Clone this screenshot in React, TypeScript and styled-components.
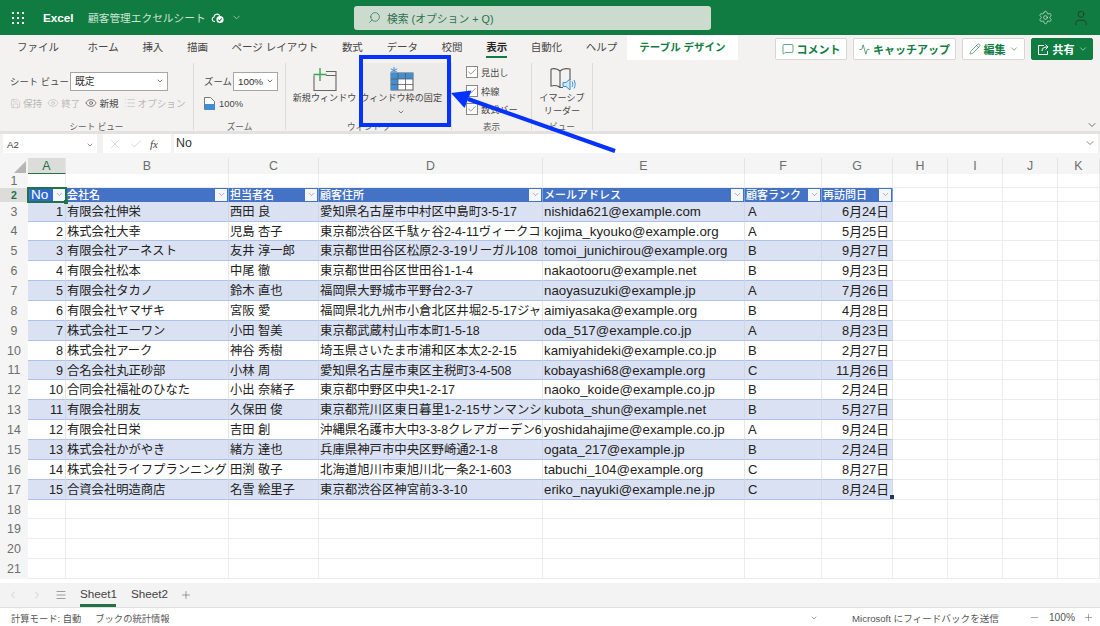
import React from "react";
import styled, { createGlobalStyle } from "styled-components";
import {
  Activity, Check, ChevronDown, ChevronLeft, ChevronRight, Eye, List, Menu, MessageSquare,
  Minus, Pencil, Plus, Save, Search, Settings, User, X,
} from "lucide-react";

const FONT = '"Liberation Sans", "Noto Sans CJK JP", sans-serif';
const GREEN = "#107c41";
const COLS = "28px 38px 163px 90px 224px 202px 77px 71px 55px 55px 55px 42px";

const Global = createGlobalStyle`
  html, body { margin: 0; padding: 0; width: 1100px; height: 626px; overflow: hidden; background: #fff; }
  body { font-family: ${FONT}; color: #323130; }
  * { box-sizing: border-box; }
`;
const Page = styled.div`
  position: relative; width: 1100px; height: 626px; display: flex; flex-direction: column; overflow: hidden;
`;

/* title bar */
const TitleBar = styled.header`
  height: 35px; background: ${GREEN}; display: grid; grid-template-columns: 354px 357px 1fr; align-items: center; color: #fff;
`;
const TitleLeft = styled.div`display: flex; align-items: center; padding-left: 12px;`;
const Waffle = styled.svg`width: 12px; height: 12px; margin-right: 19px;`;
const AppName = styled.span`font-size: 11.8px; font-weight: 700; width: 45px; letter-spacing: -0.1px;`;
const DocName = styled.span`font-size: 10.7px; color: #cfe3d7; white-space: nowrap; width: 123px;`;
const SearchBox = styled.div`
  height: 24px; background: #cbdccf; border-radius: 3px; display: flex; align-items: center; padding-left: 14px; gap: 6px;
  font-size: 10.8px; color: #2f6f4c;
`;
const TitleRight = styled.div`display: flex; justify-content: flex-end; align-items: center; gap: 19px; padding-right: 10px;`;

/* tabs */
const TabBar = styled.div`
  height: 27px; background: #f3f2f1; display: flex; justify-content: space-between; align-items: flex-start; padding: 0 7px 0 17px;
`;
const Tabs = styled.nav`display: flex; gap: 23.6px; height: 25px;`;
const Tab = styled.div<{ $active?: boolean; $first?: boolean }>`
  position: relative; height: 23px; line-height: 24px; font-size: 10.5px; white-space: nowrap; color: ${(p) => (p.$active ? "#252423" : "#484644")};
  font-weight: ${(p) => (p.$active ? 700 : 400)}; margin-right: ${(p) => (p.$first ? 5 : 0)}px;
  border-bottom: ${(p) => (p.$active ? `2px solid ${GREEN}` : "none")};
`;
const DesignTab = styled.div`
  height: 25px; line-height: 24px; width: 111px; margin-left: -14px; background: #fff; color: ${GREEN}; font-size: 10.5px; font-weight: 700; text-align: center; white-space: nowrap;
`;
const Actions = styled.div`display: flex; gap: 6px; padding-top: 3px;`;
const ActionButton = styled.div<{ $w: number; $primary?: boolean }>`
  width: ${(p) => p.$w}px; height: 22px; border-radius: 2px; display: flex; align-items: center; justify-content: center; gap: 3px;
  font-size: 11px; font-weight: 700; white-space: nowrap;
  background: ${(p) => (p.$primary ? GREEN : "#fff")}; color: ${(p) => (p.$primary ? "#fff" : GREEN)};
  border: 1px solid ${(p) => (p.$primary ? GREEN : "#d6d6d6")};
`;

/* ribbon */
const Ribbon = styled.section`
  position: relative; height: 72px; background: #f3f2f1; display: flex; padding-top: 1px; border-bottom: 3px solid #e3e2e1;
`;
const Group = styled.div<{ $w: number; $last?: boolean }>`
  width: ${(p) => p.$w}px; height: 67px; display: flex; flex-direction: column; border-right: ${(p) => (p.$last ? "none" : "1px solid #dcdbda")};
`;
const GroupBody = styled.div`flex: 1; min-height: 0; display: flex; position: relative;`;
const GroupLabel = styled.div`height: 13px; line-height: 13px; margin-bottom: -4px; font-size: 8.6px; color: #605e5c; text-align: center; white-space: nowrap; overflow: hidden;`;
const Stack = styled.div<{ $pl: number }>`display: flex; flex-direction: column; gap: 2px; padding: 8px 0 0 ${(p) => p.$pl}px;`;
const Line = styled.div`display: flex; align-items: center; height: 20px; gap: 4px; white-space: nowrap; font-size: 9.4px; color: #484644;`;
const FieldLabel = styled.span<{ $w: number }>`width: ${(p) => p.$w}px; white-space: nowrap;`;
const Select = styled.div<{ $w: number }>`
  width: ${(p) => p.$w}px; height: 19px; background: #fff; border: 1px solid #a6a6a6; display: flex; align-items: center; justify-content: space-between;
  padding: 0 3px 0 4px; font-size: 9.8px; color: #323130;
`;
const Mini = styled.span<{ $off?: boolean }>`
  display: inline-flex; align-items: center; gap: 2px; font-size: 9.6px; color: ${(p) => (p.$off ? "#b9b8b7" : "#484644")}; margin-right: 5px;
`;
const BigButton = styled.div<{ $w: number; $hl?: boolean; $pl?: number; $pr?: number }>`
  width: ${(p) => p.$w}px; height: 64px; display: flex; flex-direction: column; align-items: center; padding: 4px ${(p) => p.$pr ?? 0}px 0 ${(p) => p.$pl ?? 0}px; font-size: 9.1px; color: #484644;
  background: ${(p) => (p.$hl ? "#edebe9" : "transparent")}; white-space: nowrap; overflow: visible; line-height: 13px;
`;
const BigIcon = styled.svg`display: block; height: 25px; flex: none;`;
const ButtonChevron = styled.span`display: flex; margin-top: 3px; color: #484644;`;
const CheckList = styled.div`display: flex; flex-direction: column; padding: 2px 0 0 14px; gap: 4px;`;
const CheckRow = styled.div`display: flex; align-items: center; gap: 3px; height: 14.5px; font-size: 9.2px; color: #484644; white-space: nowrap;`;
const Box = styled.span`width: 12px; height: 12px; background: #fff; border: 1px solid #8a8886; display: inline-flex; align-items: center; justify-content: center; color: #484644;`;
const Collapse = styled.div`position: absolute; right: 2px; bottom: 0; color: #484644; display: flex;`;

/* formula bar */
const FormulaBar = styled.div`height: 19px; background: #f3f2f1; display: flex; gap: 3px; padding: 0 2px 0 3px;`;
const NameBox = styled.div`
  width: 94px; margin-right: 3px; background: #fff; display: flex; align-items: center; justify-content: space-between; padding: 2px 3px 0 4px; font-size: 9.6px; color: #444;
`;
const FxBox = styled.div`width: 68px; background: #fff; display: flex; align-items: center; gap: 7px; padding-left: 5px; color: #c0bfbe;`;
const Fx = styled.span`font: italic 11px "Liberation Serif", serif; color: #444;`;
const FormulaInput = styled.div`flex: 1; background: #fff; display: flex; align-items: center; justify-content: space-between; padding: 0 2px 1px 2px; font-size: 12.4px;`;

/* sheet */
const Sheet = styled.main`flex: 1; min-height: 0; overflow: hidden; background: #fff;`;
const GridRow = styled.div<{ $h: number }>`display: grid; grid-template-columns: ${COLS}; height: ${(p) => p.$h}px;`;
const HeadRow = styled(GridRow)`background: #f5f5f5;`;
const Corner = styled.div`position: relative; overflow: hidden;`;
const CornerMark = styled.svg`position: absolute; right: 2px; bottom: 1px;`;
const ColHead = styled.div<{ $sel?: boolean }>`
  margin-top: 5px; background: ${(p) => (p.$sel ? "#dcdcdb" : "transparent")}; color: ${(p) => (p.$sel ? "#217346" : "#6e6e6e")}; font-size: 12.4px; padding-top: 1px; line-height: 14px; text-align: center;
  border-right: 1px solid #e4e4e4; border-bottom: ${(p) => (p.$sel ? "1.5px solid #217346" : "none")};
`;
const RowHead = styled.div<{ $sel?: boolean }>`
  background: ${(p) => (p.$sel ? "#dcdcdb" : "#f5f5f5")}; color: ${(p) => (p.$sel ? "#217346" : "#6e6e6e")}; font-size: ${(p) => (p.$sel ? 10.5 : 12.4)}px; display: flex; align-items: center; justify-content: center;
  font-weight: ${(p) => (p.$sel ? 700 : 400)};
`;
const Blank = styled.div`border-right: 1px solid #ececec; border-bottom: 1px solid #ececec;`;
const HeadCell = styled.div`
  position: relative; background: #4472c4; color: #fff; font-size: 11px; font-weight: 500; line-height: 15px; padding-left: 1px; white-space: nowrap; overflow: hidden;
  border-right: 1px solid #7f9fd8;
`;
const FilterBtn = styled.span`
  position: absolute; right: 1px; top: 1px; width: 12px; height: 12px; background: #f4f6fa; color: #777; display: flex; align-items: center; justify-content: center;
`;
const Active = styled.div`
  position: relative; background: #4472c4; color: #fff; font-size: 13.5px; line-height: 12.5px; outline: 2px solid #217346; outline-offset: -1px; z-index: 1; white-space: nowrap;
`;
const ActiveText = styled.span`display: inline-block; width: 23px; background: #2f68cf; padding-left: 1px; margin: 1px 0 0 2px;`;
const Handle = styled.i`position: absolute; right: -2px; bottom: -2px; width: 4px; height: 4px; background: #217346;`;
const DataCell = styled.div<{ $odd: boolean; $align?: string; $size?: number; $pad?: number }>`
  background: ${(p) => (p.$odd ? "#d9e1f2" : "#fff")}; font-size: ${(p) => p.$size ?? 12.3}px; color: #222; line-height: 18px; white-space: nowrap; overflow: hidden;
  text-align: ${(p) => p.$align ?? "left"}; padding: 1px ${(p) => p.$pad ?? 1}px 0 ${(p) => p.$pad ?? 1}px;
  border-right: 1px solid ${(p) => (p.$odd ? "#cfd6e6" : "#e6e6e6")}; border-bottom: 1.5px solid #aec3e8;
`;
const TableEnd = styled(Blank)`position: relative;`;
const Corner2 = styled.i`position: absolute; left: -3px; bottom: 0; width: 4px; height: 4px; background: #1f3864;`;

/* bottom */
const SheetTabs = styled.div`height: 25px; background: #f3f3f3; display: flex; align-items: center; padding-left: 7px; border-bottom: 1px solid #e0e0e0; color: #555;`;
const NavIcon = styled.span<{ $w: number }>`width: ${(p) => p.$w}px; display: flex; color: inherit;`;
const SheetTab = styled.div<{ $active?: boolean }>`
  width: 36px; height: 24px; line-height: 22px; font-size: 11.7px; margin-right: 15px; white-space: nowrap; color: #444; border-bottom: 3px solid ${(p) => (p.$active ? "#217346" : "transparent")};
`;
const AddSheet = styled.span`display: flex; margin-left: -2px;`;
const StatusBar = styled.footer`height: 18px; background: #fff; display: flex; align-items: center; justify-content: space-between; padding: 1px 6px 0 11px; font-size: 9.3px; color: #555;`;
const StatusGroup = styled.div`display: flex; align-items: center; white-space: nowrap;`;
const FeedbackText = styled.span`font-size: 9.6px; margin-right: 30px;`;
const StatusLabel = styled.span`margin-right: 14px;`;
const ZoomText = styled.span`margin: 0 8px 0 9px; font-size: 10.2px;`;
const StatusChevron = styled.span`display: flex; margin-right: 34px;`;

/* annotation */
const Highlight = styled.div`position: absolute; left: 359px; top: 55px; width: 92px; height: 72px; border: 4px solid #0433ff; pointer-events: none;`;
const ArrowLayer = styled.svg`position: absolute; left: 440px; top: 80px; width: 190px; height: 80px; pointer-events: none;`;

const rows = [
  ["有限会社伸栄", "西田 良", "愛知県名古屋市中村区中島町3-5-17", "nishida621@example.com", "A", "6月24日"],
  ["株式会社大幸", "児島 杏子", "東京都渋谷区千駄ヶ谷2-4-11ヴィークコート", "kojima_kyouko@example.org", "A", "5月25日"],
  ["有限会社アーネスト", "友井 淳一郎", "東京都世田谷区松原2-3-19リーガル108", "tomoi_junichirou@example.org", "B", "9月27日"],
  ["有限会社松本", "中尾 徹", "東京都世田谷区世田谷1-1-4", "nakaotooru@example.net", "B", "9月23日"],
  ["有限会社タカノ", "鈴木 直也", "福岡県大野城市平野台2-3-7", "naoyasuzuki@example.jp", "A", "7月26日"],
  ["有限会社ヤマザキ", "宮阪 愛", "福岡県北九州市小倉北区井堀2-5-17ジャルダン", "aimiyasaka@example.org", "B", "4月28日"],
  ["株式会社エーワン", "小田 智美", "東京都武蔵村山市本町1-5-18", "oda_517@example.co.jp", "A", "8月23日"],
  ["株式会社アーク", "神谷 秀樹", "埼玉県さいたま市浦和区本太2-2-15", "kamiyahideki@example.co.jp", "B", "2月27日"],
  ["合名会社丸正砂部", "小林 周", "愛知県名古屋市東区主税町3-4-508", "kobayashi68@example.org", "C", "11月26日"],
  ["合同会社福祉のひなた", "小出 奈緒子", "東京都中野区中央1-2-17", "naoko_koide@example.co.jp", "B", "2月24日"],
  ["有限会社朋友", "久保田 俊", "東京都荒川区東日暮里1-2-15サンマンション", "kubota_shun@example.net", "B", "5月27日"],
  ["有限会社日栄", "吉田 創", "沖縄県名護市大中3-3-8クレアガーデン601", "yoshidahajime@example.co.jp", "A", "9月24日"],
  ["株式会社かがやき", "緒方 達也", "兵庫県神戸市中央区野崎通2-1-8", "ogata_217@example.jp", "B", "2月24日"],
  ["株式会社ライフプランニング", "田渕 敬子", "北海道旭川市東旭川北一条2-1-603", "tabuchi_104@example.org", "C", "8月27日"],
  ["合資会社明造商店", "名雪 絵里子", "東京都渋谷区神宮前3-3-10", "eriko_nayuki@example.ne.jp", "C", "8月24日"],
];
const tail = [0, 1, 2, 3];
const letters = ["A", "B", "C", "D", "E", "F", "G", "H", "I", "J", "K"];
const headers = ["会社名", "担当者名", "顧客住所", "メールアドレス", "顧客ランク", "再訪問日"];

const Filter = () => (
  <FilterBtn><ChevronDown size={9} strokeWidth={1.5} /></FilterBtn>
);
const Blanks = ({ n }: { n: number }) => (
  <>{Array.from({ length: n }, (_, i) => <Blank key={i} />)}</>
);

export default function App() {
  return (
    <Page>
      <Global />
      <TitleBar>
        <TitleLeft>
          <Waffle viewBox="0 0 12 12" fill="#fff">
            {[1, 6, 11].flatMap((x) => [1, 6, 11].map((y) => <rect key={`${x}${y}`} x={x - 1} y={y - 1} width="2" height="2" />))}
          </Waffle>
          <AppName>Excel</AppName>
          <DocName>顧客管理エクセルシート</DocName>
          <svg width="14" height="12" viewBox="0 0 14 12" fill="none" stroke="#fff" strokeWidth="1.1">
            <path d="M4 9.500H3A2.300 2.300 0 0 1 3 5a3 3 0 0 1 5.700-1.200" />
            <circle cx="9" cy="7.500" r="3.600" fill="#fff" stroke="none" />
            <path d="M7.200 7.600l1.300 1.300 2.200-2.400" stroke={GREEN} />
          </svg>
          <ChevronDown size={11} color="#cfe3d7" strokeWidth={1.4} style={{ marginLeft: 6 }} />
        </TitleLeft>
        <SearchBox>
          <Search size={13} strokeWidth={1.3} style={{ transform: "scaleX(-1)" }} />
          <span>検索 (オプション + Q)</span>
        </SearchBox>
        <TitleRight>
          <Settings size={15} strokeWidth={1.1} color="#dce9e1" />
          <User size={18} strokeWidth={1.2} color="#1f3f2c" />
        </TitleRight>
      </TitleBar>

      <TabBar>
        <Tabs>
          <Tab $first>ファイル</Tab>
          <Tab>ホーム</Tab>
          <Tab>挿入</Tab>
          <Tab>描画</Tab>
          <Tab>ページ レイアウト</Tab>
          <Tab>数式</Tab>
          <Tab>データ</Tab>
          <Tab>校閲</Tab>
          <Tab $active>表示</Tab>
          <Tab>自動化</Tab>
          <Tab>ヘルプ</Tab>
          <DesignTab>テーブル デザイン</DesignTab>
        </Tabs>
        <Actions>
          <ActionButton $w={72}><MessageSquare size={12} strokeWidth={1.3} />コメント</ActionButton>
          <ActionButton $w={103}><Activity size={11} strokeWidth={1.5} />キャッチアップ</ActionButton>
          <ActionButton $w={63}><Pencil size={12} strokeWidth={1.2} />編集<ChevronDown size={10} strokeWidth={1.3} /></ActionButton>
          <ActionButton $w={62} $primary>
            <svg width="13" height="13" viewBox="0 0 13 13" fill="none" stroke="#fff" strokeWidth="1"><path d="M7 2.500H1.500v9h9V8M5 8c0-3 2-4 5-4M8.500 1.500L11 4 8.500 6.500" /></svg>
            共有<ChevronDown size={10} strokeWidth={1.3} />
          </ActionButton>
        </Actions>
      </TabBar>

      <Ribbon>
        <Group $w={194}>
          <GroupBody>
            <Stack $pl={10}>
              <Line><FieldLabel $w={56}>シート ビュー</FieldLabel><Select $w={98}>既定<ChevronDown size={8} strokeWidth={2} /></Select></Line>
              <Line style={{ gap: 0 }}>
                <Mini $off><Save size={11} strokeWidth={1.2} />保持</Mini>
                <Mini $off><Eye size={12} strokeWidth={1.2} />終了</Mini>
                <Mini><Eye size={12} strokeWidth={1.3} />新規</Mini>
                <Mini $off><List size={12} strokeWidth={1.2} />オプション</Mini>
              </Line>
            </Stack>
          </GroupBody>
          <GroupLabel>シート ビュー</GroupLabel>
        </Group>
        <Group $w={92}>
          <GroupBody>
            <Stack $pl={10}>
              <Line><FieldLabel $w={25}>ズーム</FieldLabel><Select $w={45}>100%<ChevronDown size={8} strokeWidth={2} /></Select></Line>
              <Line>
                <svg width="11" height="13" viewBox="0 0 11 13">
                  <path d="M.5.5h6l4 4v8H.5z" fill="#fff" stroke="#777" />
                  <rect x="1" y="7" width="10" height="6" fill="#3f8fd2" />
                </svg>
                100%
              </Line>
            </Stack>
          </GroupBody>
          <GroupLabel>ズーム</GroupLabel>
        </Group>
        <Group $w={166}>
          <GroupBody>
            <BigButton $w={75} $pl={3}>
              <BigIcon width="25" viewBox="0 0 25 25" fill="none">
                <path d="M2 8.500V23.500H24V4.500H14M14 8.500H24" stroke="#666" strokeWidth="1.1" />
                <path d="M8 1v13M1.500 7.500h13" stroke="#3aa655" strokeWidth="1.4" />
              </BigIcon>
              <span>新規ウィンドウ</span>
            </BigButton>
            <BigButton $w={91} $hl $pr={9}>
              <BigIcon width="25" viewBox="0 0 25 25" fill="none">
                <rect x="2" y="6" width="22" height="17" fill="#fff" stroke="#5a5a5a" />
                <rect x="2" y="6" width="22" height="6" fill="#3f8fd2" />
                <rect x="2" y="6" width="7" height="17" fill="#3f8fd2" />
                <path d="M2 12h22M2 17.500h22M9 6v17M16.500 6v17" stroke="#5a5a5a" strokeWidth=".8" />
                <path d="M5 0v7M1.800 1.800l6.400 3.400M8.200 1.800L1.800 5.200" stroke="#3f8fd2" strokeWidth="1" />
              </BigIcon>
              <span>ウィンドウ枠の固定</span>
              <ButtonChevron><ChevronDown size={8} strokeWidth={2} /></ButtonChevron>
            </BigButton>
          </GroupBody>
          <GroupLabel>ウィンドウ</GroupLabel>
        </Group>
        <Group $w={80}>
          <GroupBody>
            <CheckList>
              {["見出し", "枠線", "数式バー"].map((t) => (
                <CheckRow key={t}><Box><Check size={10} strokeWidth={1.4} /></Box>{t}</CheckRow>
              ))}
            </CheckList>
          </GroupBody>
          <GroupLabel>表示</GroupLabel>
        </Group>
        <Group $w={61}>
          <GroupBody>
            <BigButton $w={61}>
              <BigIcon width="27" viewBox="0 0 27 25" fill="none">
                <path d="M2 2c4-1 7 0 9 2 2-2 5-3 10-2v11M2 2v17c4-1 7-.5 9 1.500h3M11 4v16" stroke="#555" strokeWidth="1.1" />
                <path d="M14 15.500h3l4-3.500v11l-4-3.500h-3z" fill="#cfe6f7" stroke="#3f8fd2" />
                <path d="M23 14.500c1 1.500 1 4 0 5.500M25 13c1.500 2.500 1.500 6 0 8.500" stroke="#3f8fd2" />
              </BigIcon>
              <span>イマーシブ</span>
              <span>リーダー</span>
            </BigButton>
          </GroupBody>
          <GroupLabel>ビュー</GroupLabel>
        </Group>
        <Collapse><ChevronDown size={12} strokeWidth={1.5} /></Collapse>
      </Ribbon>

      <FormulaBar>
        <NameBox>A2<ChevronDown size={8} strokeWidth={2} color="#555" /></NameBox>
        <FxBox><X size={14} strokeWidth={1} /><Check size={14} strokeWidth={1} /><Fx>fx</Fx></FxBox>
        <FormulaInput>No<ChevronDown size={12} strokeWidth={1.4} color="#555" /></FormulaInput>
      </FormulaBar>

      <Sheet>
        <HeadRow $h={20.5}>
          <Corner><CornerMark width="12" height="12" viewBox="0 0 12 12"><path d="M12 0v12H0z" fill="#b6b6b6" /></CornerMark></Corner>
          {letters.map((l, i) => <ColHead key={l} $sel={i === 0}>{l}</ColHead>)}
        </HeadRow>
        <GridRow $h={14}>
          <RowHead>1</RowHead>
          <Blanks n={11} />
        </GridRow>
        <GridRow $h={14.2}>
          <RowHead $sel>2</RowHead>
          <Active>
            <ActiveText>No</ActiveText>
            <Filter />
            <Handle />
          </Active>
          {headers.map((h) => <HeadCell key={h}>{h}<Filter /></HeadCell>)}
          <Blanks n={4} />
        </GridRow>
        {rows.map((r, i) => {
          const odd = i % 2 === 0;
          return (
            <GridRow key={r[3]} $h={19.86}>
              <RowHead>{i + 3}</RowHead>
              <DataCell $odd={odd} $align="right" $size={12.6} $pad={2}>{i + 1}</DataCell>
              <DataCell $odd={odd}>{r[0]}</DataCell>
              <DataCell $odd={odd}>{r[1]}</DataCell>
              <DataCell $odd={odd} $size={12.4}>{r[2]}</DataCell>
              <DataCell $odd={odd} $size={13.3}>{r[3]}</DataCell>
              <DataCell $odd={odd} $size={13} $pad={3}>{r[4]}</DataCell>
              <DataCell $odd={odd} $size={12.8} $align="right" $pad={3}>{r[5]}</DataCell>
              {i === rows.length - 1 ? <TableEnd><Corner2 /></TableEnd> : <Blank />}
              <Blanks n={3} />
            </GridRow>
          );
        })}
        {tail.map((i) => (
          <GridRow key={i} $h={19.86}>
            <RowHead>{i + 18}</RowHead>
            <Blanks n={11} />
          </GridRow>
        ))}
      </Sheet>

      <SheetTabs>
        <NavIcon $w={24}><ChevronLeft size={12} strokeWidth={1} color="#aaa" /></NavIcon>
        <NavIcon $w={24}><ChevronRight size={12} strokeWidth={1} color="#aaa" /></NavIcon>
        <NavIcon $w={25}><Menu size={12} strokeWidth={1.1} /></NavIcon>
        <SheetTab $active>Sheet1</SheetTab>
        <SheetTab>Sheet2</SheetTab>
        <AddSheet><Plus size={12} strokeWidth={1.1} /></AddSheet>
      </SheetTabs>
      <StatusBar>
        <StatusGroup>
          <StatusLabel>計算モード: 自動</StatusLabel>
          <span>ブックの統計情報</span>
        </StatusGroup>
        <StatusGroup>
          <StatusChevron><ChevronDown size={8} strokeWidth={1.6} /></StatusChevron>
          <FeedbackText>Microsoft にフィードバックを送信</FeedbackText>
          <Minus size={11} strokeWidth={1.1} />
          <ZoomText>100%</ZoomText>
          <Plus size={11} strokeWidth={1.1} />
        </StatusGroup>
      </StatusBar>

      <Highlight />
      <ArrowLayer viewBox="440 80 190 80">
        <path d="M468 99L615 151" stroke="#0433ff" strokeWidth="4" fill="none" />
        <path d="M451 93L471.500 90.500L464.500 108z" fill="#0433ff" />
      </ArrowLayer>
    </Page>
  );
}
